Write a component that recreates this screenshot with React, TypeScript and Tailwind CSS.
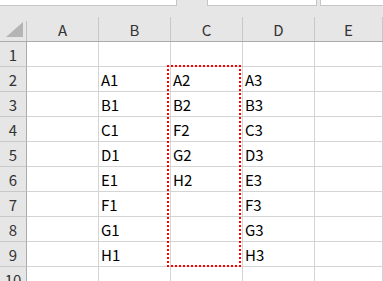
import React from 'react'

const COLS = ['A', 'B', 'C', 'D', 'E']

const DATA: Record<number, string[]> = {
  2: ['', 'A1', 'A2', 'A3', ''],
  3: ['', 'B1', 'B2', 'B3', ''],
  4: ['', 'C1', 'F2', 'C3', ''],
  5: ['', 'D1', 'G2', 'D3', ''],
  6: ['', 'E1', 'H2', 'E3', ''],
  7: ['', 'F1', '', 'F3', ''],
  8: ['', 'G1', '', 'G3', ''],
  9: ['', 'H1', '', 'H3', ''],
}

const ROWS = [1, 2, 3, 4, 5, 6, 7, 8, 9, 10]
const GRID = 'grid grid-cols-[27px_72px_72px_72px_72px_1fr]'

export default function App() {
  return (
    <div
      className="w-[383px] h-[281px] overflow-hidden bg-white relative"
      style={{ fontFamily: '"Noto Sans CJK JP", "Noto Sans", sans-serif' }}
    >
      {/* formula bar remnants */}
      <div className="flex h-[7px] bg-[#e6e6e6]">
        <div className="w-[177px] h-[6px] bg-white border-r border-b border-[#c6c6c6]" />
        <div className="w-[30px]" />
        <div className="w-[110px] h-[6px] bg-white border-x border-b border-[#c6c6c6]" />
        <div className="w-[3px]" />
        <div className="flex-1 h-[6px] bg-white border-l border-b border-[#c6c6c6]" />
      </div>

      {/* column headers */}
      <div className={`${GRID} h-[35px] bg-[#e6e6e6] border-b border-[#ababab]`}>
        <div className="flex items-end">
          <div className="h-[20px] w-full border-r border-[#c0c0c0] flex items-start">
            <svg width="26" height="20" className="block">
              <polygon points="6,16 23,16 23,1" fill="#b4b4b4" />
            </svg>
          </div>
        </div>
        {COLS.map(c => (
          <div key={c} className="flex items-end">
            <div className="h-[24px] w-full border-r border-[#c8c8c8] flex items-center justify-center text-[15px] text-[#333] leading-none">
              {c}
            </div>
          </div>
        ))}
      </div>

      {/* rows */}
      {ROWS.map(r => (
        <div key={r} className={`${GRID} h-[25px]`}>
          <div className="bg-[#e6e6e6] border-r border-b border-[#ababab] border-b-[#c8c8c8] flex items-center justify-center text-[15px] text-[#333] leading-none">
            {r}
          </div>
          {COLS.map((c, i) => (
            <div
              key={c}
              className="border-r border-b border-[#d4d4d4] flex items-center pl-[2px] text-[15px] text-black leading-none"
            >
              {DATA[r]?.[i] ?? ''}
            </div>
          ))}
        </div>
      ))}

      {/* copy marquee around C2:C9 */}
      <div className="absolute left-[167px] top-[65px] w-[74px] h-[202px] border-2 border-dotted border-[#ff0000] pointer-events-none" />
    </div>
  )
}
